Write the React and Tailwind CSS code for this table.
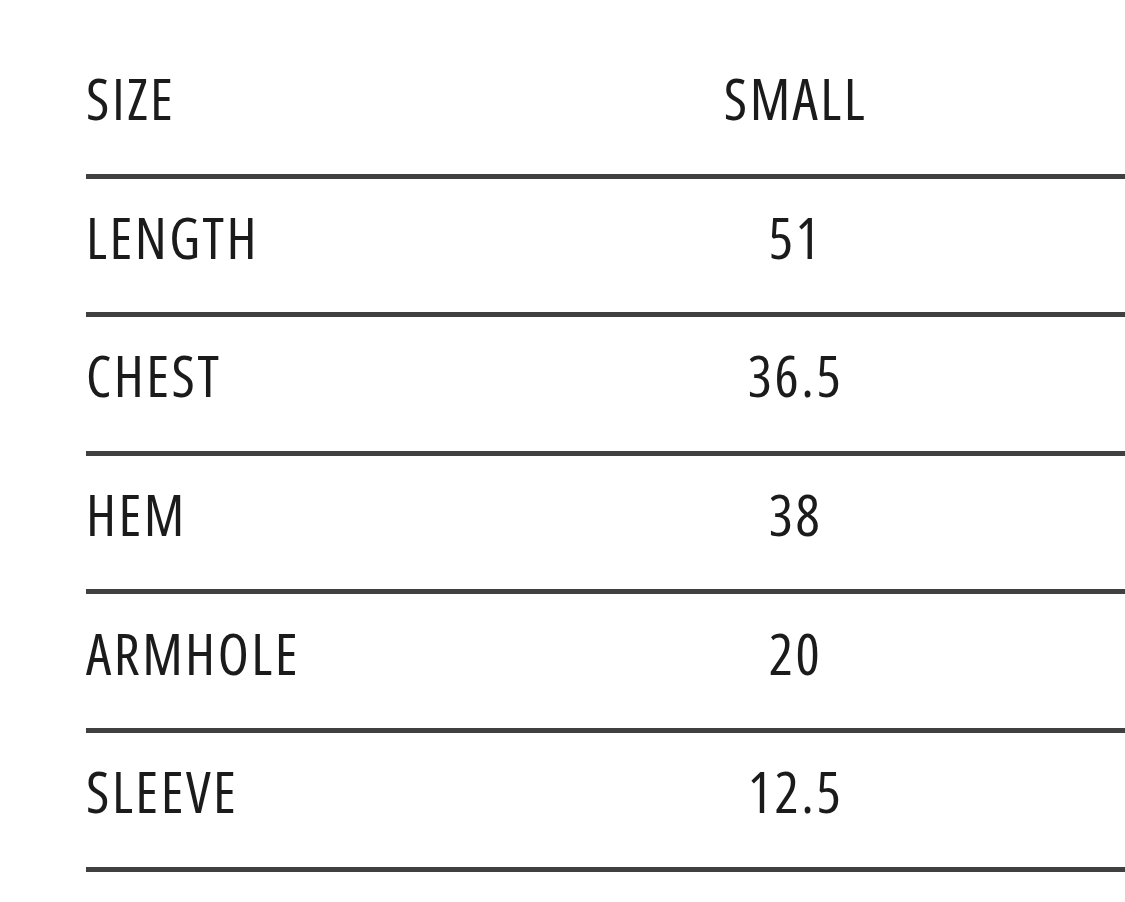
const ROWS = [
  ['SIZE', 'SMALL'],
  ['LENGTH', '51'],
  ['CHEST', '36.5'],
  ['HEM', '38'],
  ['ARMHOLE', '20'],
  ['SLEEVE', '12.5'],
];

export default function App() {
  return (
    <div className="min-h-[902px] w-full bg-white pt-[40px] pl-[86px] font-['Open_Sans',sans-serif] font-stretch-condensed text-[57px] leading-none tracking-[2.5px] text-[#1b1b1b]">
      {ROWS.map(([label, value]) => (
        <div
          key={label}
          className="grid h-[138.6px] grid-cols-[377px_1fr] items-center border-b-[5px] border-[#404040] pb-[16px]"
        >
          <span>{label}</span>
          <span className="pl-[3px] text-center">{value}</span>
        </div>
      ))}
    </div>
  );
}
